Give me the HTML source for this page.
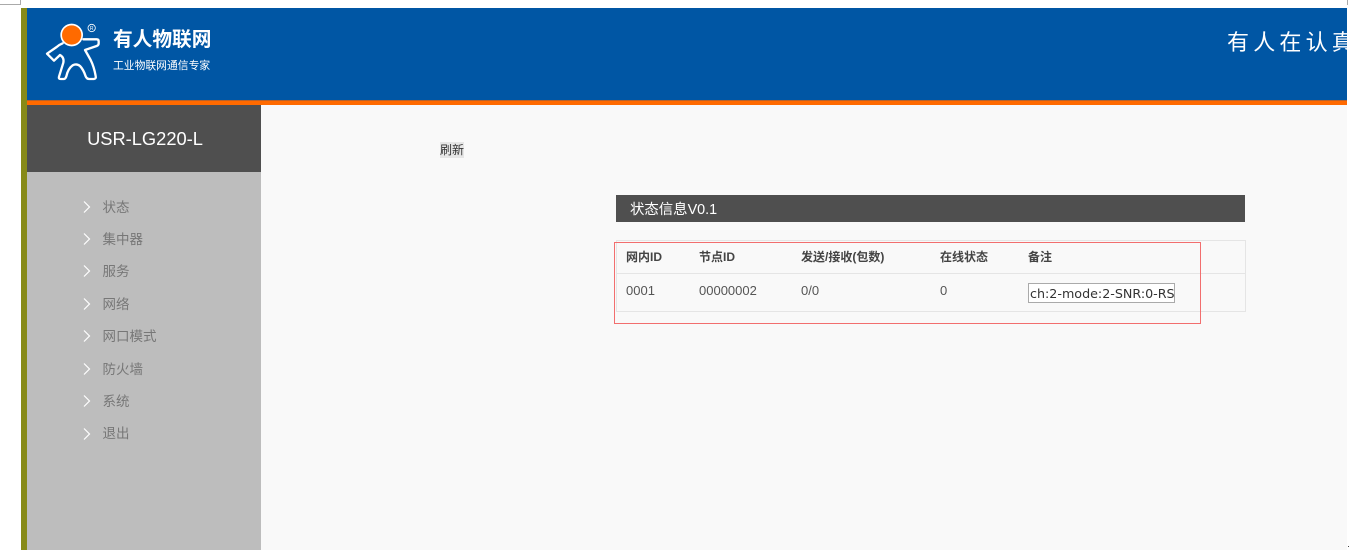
<!DOCTYPE html>
<html lang="zh">
<head>
<meta charset="utf-8">
<title>USR-LG220-L</title>
<style>
html,body{margin:0;padding:0;width:1349px;height:554px;overflow:hidden;background:#fff;}
body{position:relative;font-family:"Liberation Sans","Noto Sans CJK SC",sans-serif;}
.a{position:absolute;white-space:nowrap;}
.t{font-size:13px;line-height:16px;color:#555;}
.h{font-size:12px;line-height:16px;color:#444;font-weight:bold;}
.m{position:absolute;left:102.5px;font-size:13.5px;line-height:16px;color:#777;white-space:nowrap;}
.c{position:absolute;left:83px;}
</style>
</head>
<body>
<div class="a" style="left:0;top:4px;width:21px;height:1px;background:#aaa;"></div>
<div class="a" style="left:20px;top:0;width:1px;height:5px;background:#aaa;"></div>
<div class="a" style="left:1347px;top:0;width:1px;height:5px;background:#aaa;"></div>

<div class="a" style="left:21px;top:8px;width:6px;height:542px;background:#878a18;"></div>
<div class="a" style="left:27px;top:8px;width:1320px;height:92px;background:#0056a4;"></div>
<div class="a" style="left:27px;top:100px;width:1320px;height:1px;background:#b8612a;"></div>
<div class="a" style="left:27px;top:101px;width:1320px;height:4px;background:#ff6a00;"></div>
<div class="a" style="left:261px;top:105px;width:1086px;height:445px;background:#f9f9f9;"></div>
<div class="a" style="left:27px;top:105px;width:234px;height:67px;background:#4f4f4f;"></div>
<div class="a" style="left:27px;top:172px;width:234px;height:378px;background:#bdbdbd;"></div>

<svg class="a" style="left:30px;top:10px;" width="80" height="80" viewBox="0 0 240 240">
<path d="M98 100Q88 104 80 111L51 131L72 152L90 135Q103 142 100 158L87 200Q85 207 92 207L102 207Q107 206 109 199Q114 176 128 166Q140 160 150 168Q160 178 167 199Q170 207 178 207L192 207Q199 206 197 198Q192 170 182 150Q172 132 165 120L200 108Q206 106 206 100L206 94Q206 88 200 88L160 88" fill="none" stroke="#fff" stroke-width="7" stroke-linejoin="round" stroke-linecap="round"/>
<circle cx="125" cy="75" r="34" fill="#fff"/>
<circle cx="125" cy="75" r="29" fill="#ff6a00"/>
<circle cx="185" cy="54" r="11" fill="none" stroke="#fff" stroke-width="2.5"/>
<text x="185" y="60" font-size="15" fill="#fff" text-anchor="middle" font-family="Liberation Sans">R</text>
</svg>

<div class="a" style="left:113px;top:27px;font-size:19.7px;line-height:26px;font-weight:bold;color:#fff;">有人物联网</div>
<div class="a" style="left:113px;top:59px;font-size:10.8px;line-height:14px;color:#fff;">工业物联网通信专家</div>
<div class="a" style="left:1227px;top:28px;font-size:22px;line-height:30px;letter-spacing:4.2px;color:#fff;width:120px;overflow:hidden;">有人在认真做事</div>

<div class="a" style="left:27px;top:126px;width:236px;text-align:center;font-size:18.3px;line-height:26px;color:#fff;">USR-LG220-L</div>

<svg class="c" style="top:201px" width="8" height="12"><path d="M1 .5L6.5 6L1 11.5" fill="none" stroke="#fff" stroke-width="1.2"/></svg><div class="m" style="top:200px">状态</div>
<svg class="c" style="top:233px" width="8" height="12"><path d="M1 .5L6.5 6L1 11.5" fill="none" stroke="#fff" stroke-width="1.2"/></svg><div class="m" style="top:232px">集中器</div>
<svg class="c" style="top:265px" width="8" height="12"><path d="M1 .5L6.5 6L1 11.5" fill="none" stroke="#fff" stroke-width="1.2"/></svg><div class="m" style="top:264px">服务</div>
<svg class="c" style="top:298px" width="8" height="12"><path d="M1 .5L6.5 6L1 11.5" fill="none" stroke="#fff" stroke-width="1.2"/></svg><div class="m" style="top:297px">网络</div>
<svg class="c" style="top:330px" width="8" height="12"><path d="M1 .5L6.5 6L1 11.5" fill="none" stroke="#fff" stroke-width="1.2"/></svg><div class="m" style="top:329px">网口模式</div>
<svg class="c" style="top:363px" width="8" height="12"><path d="M1 .5L6.5 6L1 11.5" fill="none" stroke="#fff" stroke-width="1.2"/></svg><div class="m" style="top:362px">防火墙</div>
<svg class="c" style="top:395px" width="8" height="12"><path d="M1 .5L6.5 6L1 11.5" fill="none" stroke="#fff" stroke-width="1.2"/></svg><div class="m" style="top:394px">系统</div>
<svg class="c" style="top:428px" width="8" height="12"><path d="M1 .5L6.5 6L1 11.5" fill="none" stroke="#fff" stroke-width="1.2"/></svg><div class="m" style="top:426px">退出</div>

<div class="a" style="left:440px;top:142px;width:24px;height:16px;background:#e6e6e6;font-size:12px;line-height:16px;color:#333;">刷新</div>

<div class="a" style="left:616px;top:195px;width:629px;height:27px;background:#4f4f4f;"></div>
<div class="a" style="left:630px;top:201px;font-size:14.4px;line-height:18px;color:#fff;">状态信息V0.1</div>

<div class="a" style="left:616px;top:240px;width:628px;height:70px;border:1px solid #e5e5e5;"></div>
<div class="a" style="left:616px;top:273px;width:629px;height:1px;background:#e5e5e5;"></div>

<div class="a h" style="left:626px;top:249px;">网内ID</div>
<div class="a h" style="left:699px;top:249px;">节点ID</div>
<div class="a h" style="left:801px;top:249px;">发送/接收(包数)</div>
<div class="a h" style="left:940px;top:249px;">在线状态</div>
<div class="a h" style="left:1028px;top:249px;">备注</div>

<div class="a t" style="left:626px;top:283px;">0001</div>
<div class="a t" style="left:699px;top:283px;">00000002</div>
<div class="a t" style="left:801px;top:283px;">0/0</div>
<div class="a t" style="left:940px;top:283px;">0</div>
<div class="a" style="left:1028px;top:283px;width:145px;height:18px;border:1px solid #aaa;background:#fff;overflow:hidden;">
<div style="position:absolute;left:1px;top:1.5px;width:144px;overflow:hidden;font-family:'DejaVu Sans',sans-serif;font-size:12.7px;line-height:16px;color:#333;white-space:nowrap;">ch:2-mode:2-SNR:0-RSSI:0</div>
</div>

<div class="a" style="left:614px;top:242px;width:585px;height:80px;border:1px solid #f26e6e;"></div>

<div class="a" style="left:1348px;top:546px;width:1px;height:1px;background:#444;"></div>
</body>
</html>
